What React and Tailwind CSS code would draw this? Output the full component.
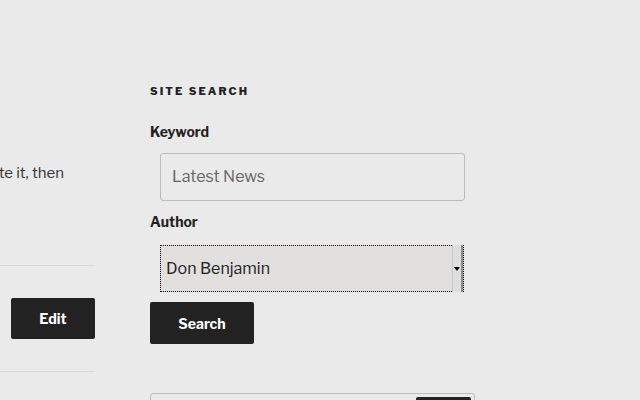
import React from 'react'

const font = { fontFamily: '"Libre Franklin", Roboto, "Liberation Sans", sans-serif' }

const App = () => {
  return (
    <div className="w-[640px] h-[400px] overflow-hidden bg-[#eaeaea] text-[#222] flex items-start" style={font}>
      {/* left column, scrolled off the left edge */}
      <div className="w-[95px] shrink-0 flex flex-col">
        <div className="h-[160px] shrink-0" />
        <div className="flex justify-end overflow-hidden pr-[31px] shrink-0">
          <p className="whitespace-nowrap text-[15px] leading-[26px] text-[#333]">you can update it, then</p>
        </div>
        <div className="h-[79px] shrink-0" />
        <div className="border-t border-[#d8d8d8] shrink-0" />
        <div className="pt-[32px] pl-[11px] shrink-0">
          <button className="w-[84px] h-[41px] rounded-[2px] bg-[#222] text-white text-[14px] font-bold">Edit</button>
        </div>
        <div className="h-[32px] shrink-0" />
        <div className="border-t border-[#d8d8d8] shrink-0" />
      </div>

      {/* sidebar search widget */}
      <div className="ml-[55px] w-[325px] shrink-0 flex flex-col pt-[85px]">
        <h2 className="shrink-0 text-[11px] font-extrabold tracking-[0.19em] leading-[12px] text-[#222]">SITE SEARCH</h2>
        <label className="shrink-0 mt-[25px] text-[14px] font-bold leading-[20px]">Keyword</label>
        <div className="shrink-0 mt-[11px] ml-[10px] w-[305px] h-[48px] rounded-[3px] border border-[#bbb] bg-[#eaeaea] flex items-center px-[11px]">
          <span className="text-[16px] text-[#666]">Latest News</span>
        </div>
        <label className="shrink-0 mt-[11px] text-[14px] font-bold leading-[20px]">Author</label>
        <div className="shrink-0 mt-[13px] ml-[10px] w-[304px] h-[47px] flex bg-[#e2e0de] border border-dotted border-black">
          <div className="flex-1 flex items-center pl-[5px]">
            <span className="text-[16px] text-[#222]">Don Benjamin</span>
          </div>
          <div className="w-[11px] bg-[#dedede] border-l border-[#c8c8c8] border-r-2 border-r-[#8a8a8a] flex items-center justify-center -my-px">
            <div className="w-0 h-0 border-l-[3px] border-r-[3px] border-t-[4px] border-l-transparent border-r-transparent border-t-black" />
          </div>
        </div>
        <button className="shrink-0 mt-[10px] w-[104px] h-[42px] rounded-[2px] bg-[#222] text-white text-[14px] font-bold">Search</button>
        <div className="shrink-0 mt-[49px] w-[325px] h-[40px] rounded-[3px] border border-[#bbb] flex justify-end pr-[3px] pt-[3px]">
          <div className="w-[55px] h-[30px] bg-[#222] rounded-[2px]" />
        </div>
      </div>
    </div>
  )
}

export default App
